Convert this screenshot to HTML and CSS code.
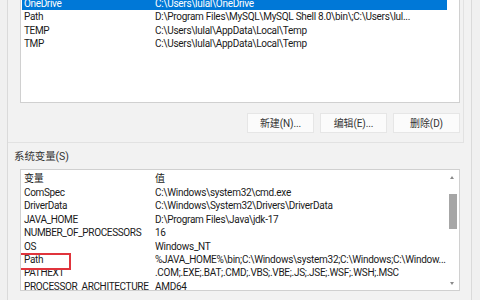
FILE: index.html
```html
<!DOCTYPE html>
<html>
<head>
<meta charset="utf-8">
<link rel="stylesheet" href="styles.css">
</head>
<body>
<div class="page">
  <div class="user-group">
    <div class="list user-list">
      <div class="rows">
        <div class="row selected"><span class="name">OneDrive</span><span class="val">C:\Users\lulal\OneDrive</span></div>
        <div class="row"><span class="name">Path</span><span class="val">D:\Program Files\MySQL\MySQL Shell 8.0\bin\;C:\Users\lul...</span></div>
        <div class="row"><span class="name">TEMP</span><span class="val">C:\Users\lulal\AppData\Local\Temp</span></div>
        <div class="row"><span class="name">TMP</span><span class="val">C:\Users\lulal\AppData\Local\Temp</span></div>
      </div>
    </div>
    <div class="buttons">
      <div class="btn">新建(N)...</div>
      <div class="btn">编辑(E)...</div>
      <div class="btn">删除(D)</div>
    </div>
  </div>
  <div class="label">系统变量(S)</div>
  <div class="list sys-list">
    <div class="rows">
      <div class="row head"><span class="name">变量</span><span class="val">值</span></div>
      <div class="row"><span class="name">ComSpec</span><span class="val">C:\Windows\system32\cmd.exe</span></div>
      <div class="row"><span class="name">DriverData</span><span class="val">C:\Windows\System32\Drivers\DriverData</span></div>
      <div class="row"><span class="name">JAVA_HOME</span><span class="val">D:\Program Files\Java\jdk-17</span></div>
      <div class="row"><span class="name">NUMBER_OF_PROCESSORS</span><span class="val">16</span></div>
      <div class="row"><span class="name">OS</span><span class="val">Windows_NT</span></div>
      <div class="row"><span class="name"><span class="mark">Path</span></span><span class="val">%JAVA_HOME%\bin;C:\Windows\system32;C:\Windows;C:\Window...</span></div>
      <div class="row"><span class="name">PATHEXT</span><span class="val">.COM;.EXE;.BAT;.CMD;.VBS;.VBE;.JS;.JSE;.WSF;.WSH;.MSC</span></div>
      <div class="row"><span class="name">PROCESSOR_ARCHITECTURE</span><span class="val">AMD64</span></div>
    </div>
    <div class="scrollbar">
      <div class="arrow up"></div>
      <div class="track"><div class="thumb"></div></div>
      <div class="arrow down"></div>
    </div>
  </div>
</div>
</body>
</html>
```

FILE: styles.css
```css
html, body {
  margin: 0;
  padding: 0;
}
body {
  width: 480px;
  height: 300px;
  overflow: hidden;
  background: #f0f0f0;
  font-family: Roboto, "Noto Sans CJK SC", sans-serif;
  font-size: 10px;
  letter-spacing: -0.1px;
  color: #1a1a1a;
}
.page {
  margin-left: 7px;
  width: 465px;
  height: 300px;
  border-left: 1px solid #dadada;
  border-right: 1px solid #dadada;
  background: #f2f2f2;
  box-sizing: border-box;
}
.user-group {
  width: 456px;
  height: 143px;
  border-right: 1px solid #e2e2e2;
  border-bottom: 1px solid #e2e2e2;
  box-sizing: border-box;
  display: flex;
  flex-direction: column;
}
.list {
  margin-left: 12px;
  width: 440px;
  background: #fff;
  border: 1px solid #d0d0d0;
  box-sizing: border-box;
  display: flex;
}
.user-list {
  height: 106px;
  margin-top: -3px;
  border-top: none;
}
.rows {
  flex: 1;
  padding: 0 1px;
  overflow: hidden;
}
.row {
  display: flex;
  height: 13.4px;
  line-height: 13.4px;
  white-space: nowrap;
  width: 425px;
}
.row.selected {
  background: #0078d7;
  color: #fff;
}
.name {
  width: 131px;
  padding-left: 2px;
  flex: none;
  letter-spacing: -0.35px;
}
.val {
  flex: 1;
  overflow: hidden;
  letter-spacing: -0.28px;
}
.buttons {
  display: flex;
  justify-content: flex-end;
  gap: 6px;
  margin-top: 10px;
  padding-right: 3px;
}
.btn {
  width: 67px;
  height: 20px;
  line-height: 20px;
  background: #fbfbfb;
  border: 1px solid #e6e6e6;
  box-sizing: border-box;
  text-align: center;
  font-size: 10px;
  color: #333;
}
.label {
  margin-left: 6px;
  height: 26px;
  line-height: 28px;
  color: #333;
  font-size: 10.5px;
}
.sys-list {
  height: 122px;
}
.sys-list .rows {
  padding-top: 1px;
}
.row.head {
  height: 15px;
  line-height: 15px;
}
.mark {
  display: inline-block;
  position: relative;
}
.mark::after {
  content: "";
  position: absolute;
  left: -6px;
  top: 0;
  width: 49px;
  height: 13px;
  border: 2px solid #e0343c;
}
.scrollbar {
  width: 13px;
  flex: none;
  display: flex;
  flex-direction: column;
  align-items: center;
}
.arrow {
  height: 14px;
  width: 13px;
  flex: none;
  position: relative;
}
.arrow::after {
  content: "";
  position: absolute;
  left: 4px;
  top: 6px;
  border-left: 2.5px solid transparent;
  border-right: 2.5px solid transparent;
}
.arrow.up::after {
  border-bottom: 3px solid #8a8a8a;
}
.arrow.down::after {
  border-top: 3px solid #8a8a8a;
}
.track {
  flex: 1;
  width: 13px;
  display: flex;
  justify-content: center;
  padding-top: 10px;
}
.thumb {
  width: 8px;
  height: 35px;
  background: #a6a6a6;
}
```
